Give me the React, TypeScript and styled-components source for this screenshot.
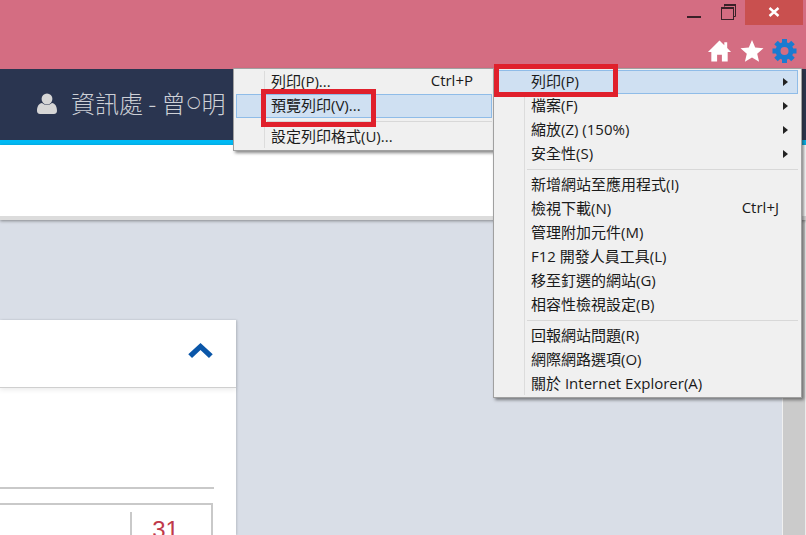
import React from "react";
import styled, { createGlobalStyle } from "styled-components";

const Global = createGlobalStyle`
  html, body { margin: 0; padding: 0; width: 806px; height: 535px; overflow: hidden; background: #d9dee7; }
  body { font-family: "Open Sans", "Noto Sans CJK TC", sans-serif; }
`;

const Page = styled.div`
  position: relative;
  width: 806px;
  height: 535px;
  overflow: hidden;
  display: flex;
  flex-direction: column;
`;

const TitleBar = styled.header`
  height: 69px;
  background: #d46d82;
  flex: none;
  display: flex;
  flex-direction: column;
  align-items: flex-end;
`;

const WindowControls = styled.div`
  display: flex;
  align-items: flex-start;
  height: 25px;
  padding-right: 3px;
`;

const WinButton = styled.div<{ $width: number; $top: number; $close?: boolean }>`
  width: ${(p) => p.$width}px;
  height: 25px;
  box-sizing: border-box;
  padding-top: ${(p) => p.$top}px;
  background: ${(p) => (p.$close ? "#c9504f" : "transparent")};
  display: flex;
  align-items: flex-start;
  justify-content: center;
  svg { display: block; }
`;

const ToolIcons = styled.div`
  display: flex;
  align-items: center;
  gap: 8px;
  height: 28px;
  margin-top: 12px;
  padding-right: 9px;
`;

const NavBar = styled.nav`
  height: 76px;
  box-sizing: border-box;
  flex: none;
  background: #2a3550;
  border-bottom: 5px solid #00baf5;
  display: flex;
  align-items: center;
  padding: 0 0 2px 37px;
  gap: 14px;
  color: #cdd0d6;
  font-size: 24px;
  font-family: "Noto Sans CJK TC", "Open Sans", sans-serif;
`;

const UserName = styled.span`
  font-weight: 300;
  display: flex;
  align-items: center;
  white-space: pre;
  margin-bottom: 3px;
`;

const RoundMark = styled.span`
  font: 16px/1 "DejaVu Sans", sans-serif;
  width: 16px;
  text-align: center;
`;

const SubBar = styled.div`
  height: 75px;
  box-sizing: border-box;
  flex: none;
  background: #fff;
  border-bottom: 4px solid #dcdcdc;
  box-shadow: 0 1px 3px rgba(60, 60, 60, 0.55);
  position: relative;
  z-index: 1;
`;

const Main = styled.div`
  flex: 1;
  display: flex;
  min-height: 0;
  justify-content: space-between;
`;

const Panel = styled.section`
  width: 236px;
  margin-top: 100px;
  background: #fff;
  box-shadow: 1px 0 2px rgba(0, 0, 0, 0.15);
  align-self: stretch;
  display: flex;
  flex-direction: column;
`;

const PanelHead = styled.div`
  height: 68px;
  box-sizing: border-box;
  flex: none;
  display: flex;
  align-items: center;
  justify-content: flex-end;
  padding: 0 23px 6px 0;
  border-bottom: 1px solid #cfcfcf;
  box-shadow: 0 2px 5px rgba(0, 0, 0, 0.08);
`;

const PanelBody = styled.div`
  flex: 1;
  padding: 99px 22px 0 0;
  display: flex;
  flex-direction: column;
`;

const Rule = styled.div`
  height: 2px;
  background: #c9c9c9;
`;

const TableBox = styled.div`
  margin-top: 14px;
  margin-right: 1px;
  flex: 1;
  border-top: 2px solid #c9c9c9;
  border-right: 2px solid #c9c9c9;
  padding-top: 7px;
  display: flex;
  justify-content: flex-end;
`;

const DayCell = styled.div`
  width: 81px;
  box-sizing: border-box;
  border-left: 2px solid #c9c9c9;
  text-align: center;
  color: #c0394b;
  font: 24px/26px "Liberation Sans", sans-serif;
  padding: 5px 12px 0 0;
`;

const Scrollbar = styled.div`
  width: 24px;
  box-sizing: border-box;
  flex: none;
  background: #cbcbcb;
  border-left: 1px solid #f0f0f0;
  border-right: 1px solid #ececec;
`;

const Menu = styled.div<{ $left: number; $width: number }>`
  position: absolute;
  top: 68px;
  left: ${(p) => p.$left}px;
  width: ${(p) => p.$width}px;
  box-sizing: border-box;
  background: #f0f0f0;
  border: 1px solid #a0a0a0;
  padding: 1px 3px 1px 2px;
  box-shadow: 2px 2px 3px rgba(40, 40, 40, 0.55);
  font-size: 15px;
  color: #1a1a1a;
  z-index: 2;
  &::before {
    content: "";
    position: absolute;
    top: 2px;
    bottom: 2px;
    left: 30px;
    width: 1px;
    background: #dcdcdc;
  }
`;

const Item = styled.div<{ $active?: boolean }>`
  height: 24px;
  box-sizing: border-box;
  display: flex;
  align-items: center;
  justify-content: space-between;
  padding: 0 9px 0 34px;
  position: relative;
  border: 1px solid ${(p) => (p.$active ? "#8fbce8" : "transparent")};
  background: ${(p) => (p.$active ? "#cfe0f2" : "transparent")};
  white-space: nowrap;
`;

const ItemLabel = styled.span`
  position: relative;
  top: -2px;
`;

const Shortcut = styled(ItemLabel)`
  margin-right: 9px;
`;

const Arrow = styled.span`
  width: 0;
  height: 0;
  border-left: 5px solid #222;
  border-top: 4px solid transparent;
  border-bottom: 4px solid transparent;
`;

const Sep = styled.div`
  height: 1px;
  margin: 3px 0 3px 31px;
  background: #d8d8d8;
`;

const RedBox = styled.div<{ $l: number; $t: number; $w: number; $h: number }>`
  position: absolute;
  left: ${(p) => p.$l}px;
  top: ${(p) => p.$t}px;
  width: ${(p) => p.$w}px;
  height: ${(p) => p.$h}px;
  box-sizing: border-box;
  border: 5px solid #e0202c;
  z-index: 3;
`;

const main: (string | null | [string, string] | { a: string })[] = [
  { a: "列印(P)" },
  { a: "檔案(F)" },
  { a: "縮放(Z) (150%)" },
  { a: "安全性(S)" },
  null,
  "新增網站至應用程式(I)",
  ["檢視下載(N)", "Ctrl+J"],
  "管理附加元件(M)",
  "F12 開發人員工具(L)",
  "移至釘選的網站(G)",
  "相容性檢視設定(B)",
  null,
  "回報網站問題(R)",
  "網際網路選項(O)",
  "關於 Internet Explorer(A)",
];

export default function App() {
  return (
    <Page>
      <Global />
      <TitleBar>
        <WindowControls>
          <WinButton $width={36} $top={15}>
            <svg width="14" height="4" viewBox="0 0 14 4"><rect y="1" width="14" height="2" fill="#3a2128" /></svg>
          </WinButton>
          <WinButton $width={33} $top={4}>
            <svg width="16" height="16" viewBox="0 0 16 16" fill="none" stroke="#3a2128">
              <path d="M3.500 2.500V0.500H14.500V12.500H12.500" />
              <rect x="0.500" y="3.500" width="12" height="12" />
              <rect x="1" y="3" width="11" height="2" fill="#3a2128" stroke="none" />
              <rect x="3" y="0" width="12" height="2" fill="#3a2128" stroke="none" />
            </svg>
          </WinButton>
          <WinButton $width={58} $top={7} $close>
            <svg width="12" height="10" viewBox="0 0 12 10"><path d="M1.500 1L10.500 9M10.500 1L1.500 9" stroke="#fff" strokeWidth="2.400" /></svg>
          </WinButton>
        </WindowControls>
        <ToolIcons>
          <svg width="25" height="24" viewBox="0 0 26 24">
            <path d="M13 1L1 13h3.500v10h6v-7h5v7h6V13H25l-4-4V3h-3v3z" fill="#fff" />
          </svg>
          <svg width="24" height="24" viewBox="0 0 24 24">
            <path d="M12 1l3.200 7.600 8.300.7-6.300 5.400 1.900 8.100L12 18.500l-7.100 4.300 1.900-8.100L.5 9.300l8.300-.7z" fill="#fff" />
          </svg>
          <svg width="25" height="24" viewBox="0 0 24 24">
            <g fill="#1b7bd0">
              <path fillRule="evenodd" d="M12 3a9 9 0 1 0 0 18 9 9 0 0 0 0-18zm0 5a4 4 0 1 1 0 8 4 4 0 0 1 0-8z" />
              <rect x="9.500" y="0" width="5" height="5" />
              <rect x="9.500" y="19" width="5" height="5" />
              <rect x="0" y="9.500" width="5" height="5" />
              <rect x="19" y="9.500" width="5" height="5" />
              <rect x="9.500" y="0" width="5" height="5" transform="rotate(45 12 12)" />
              <rect x="9.500" y="19" width="5" height="5" transform="rotate(45 12 12)" />
              <rect x="0" y="9.500" width="5" height="5" transform="rotate(45 12 12)" />
              <rect x="19" y="9.500" width="5" height="5" transform="rotate(45 12 12)" />
            </g>
          </svg>
        </ToolIcons>
      </TitleBar>
      <NavBar>
        <svg width="20" height="21" viewBox="0 0 20 21">
          <ellipse cx="10" cy="6" rx="5.400" ry="5.600" fill="#d6d6d6" />
          <path d="M0 18c0-5 2-7.500 5-8 1.500 1.300 3 2 5 2s3.500-.7 5-2c3 .5 5 3 5 8 0 2-1.500 3-3 3H3c-1.500 0-3-1-3-3z" fill="#d6d6d6" />
        </svg>
        <UserName>
          資訊處 - 曾<RoundMark>○</RoundMark>明
        </UserName>
      </NavBar>
      <SubBar />
      <Main>
        <Panel>
          <PanelHead>
            <svg width="25" height="16" viewBox="0 0 26 17">
              <path d="M13 0L26 12l-4 4-9-8.500L4 16l-4-4z" fill="#0a56a8" />
            </svg>
          </PanelHead>
          <PanelBody>
            <Rule />
            <TableBox>
              <DayCell>31</DayCell>
            </TableBox>
          </PanelBody>
        </Panel>
        <Scrollbar />
      </Main>

      <Menu $left={233} $width={263}>
        <Item>
          <ItemLabel>列印(P)...</ItemLabel>
          <Shortcut>Ctrl+P</Shortcut>
        </Item>
        <Item $active><ItemLabel>預覽列印(V)...</ItemLabel></Item>
        <Sep />
        <Item><ItemLabel>設定列印格式(U)...</ItemLabel></Item>
      </Menu>

      <Menu $left={493} $width={309}>
        {main.map((m, i) => {
          if (m === null) return <Sep key={i} />;
          if (typeof m === "string") return <Item key={i}><ItemLabel>{m}</ItemLabel></Item>;
          if (Array.isArray(m))
            return (
              <Item key={i}>
                <ItemLabel>{m[0]}</ItemLabel>
                <Shortcut>{m[1]}</Shortcut>
              </Item>
            );
          return (
            <Item key={i} $active={i === 0}>
              <ItemLabel>{m.a}</ItemLabel>
              <Arrow />
            </Item>
          );
        })}
      </Menu>

      <RedBox $l={494} $t={64} $w={124} $h={33} />
      <RedBox $l={261} $t={89} $w={115} $h={38} />
    </Page>
  );
}
